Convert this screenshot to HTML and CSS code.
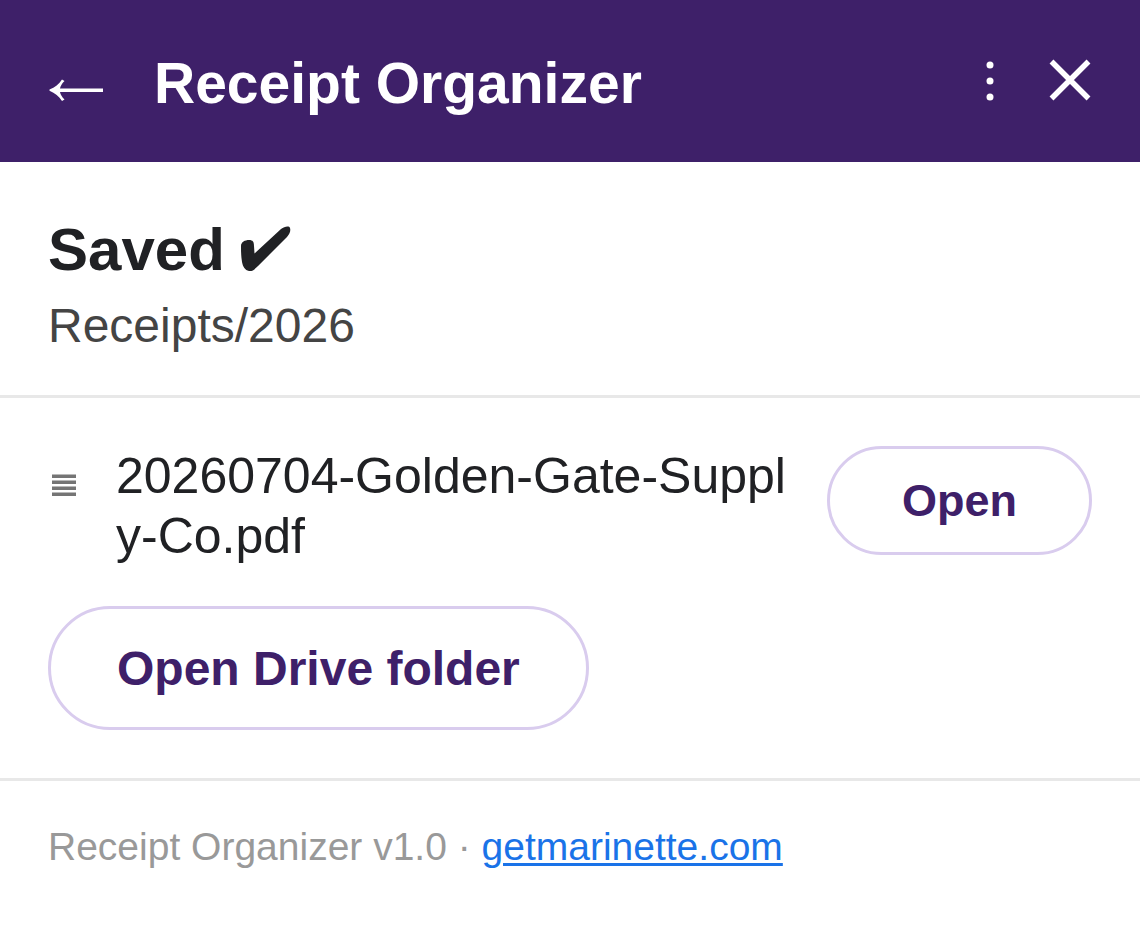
FILE: index.html
```html
<!DOCTYPE html>
<html lang="en">
<head>
    <meta charset="UTF-8">
    <meta name="viewport" content="width=device-width, initial-scale=1.0">
    <title>Receipt Organizer</title>
    <link rel="stylesheet" href="styles.css">
</head>
<body>

<header class="header">
    <div class="header-title">
        <button class="icon-btn" type="button" aria-label="Back">
            <svg width="56" height="24" viewBox="0 0 56 24" fill="#fff">
                <path d="M55 15H12C12.500 17.500 14 20 16.500 22.500L14 24C11 19.500 7 16 1.500 13.800V12.600C7 10.500 11 7 14 2.500L16.500 4C14 6.500 12.500 9 12 11.400H55Z"/>
            </svg>
        </button>
        <h1>Receipt Organizer</h1>
    </div>
    <div class="header-actions">
        <button class="icon-btn" type="button" aria-label="More options">
            <svg width="12" height="48" viewBox="0 0 12 48" fill="#fff">
                <circle cx="6" cy="8" r="3.500"/>
                <circle cx="6" cy="24" r="3.500"/>
                <circle cx="6" cy="40" r="3.500"/>
            </svg>
        </button>
        <button class="icon-btn" type="button" aria-label="Close">
            <svg width="44" height="44" viewBox="0 0 44 44" fill="none" stroke="#fff" stroke-width="5.500">
                <path d="M3.500 2.500L40.500 39.500M40.500 2.500L3.500 39.500"/>
            </svg>
        </button>
    </div>
</header>

<main>
    <!-- Save status -->
    <section class="status">
        <h2>Saved
            <svg class="check" width="52" height="48" viewBox="0 0 52 48" fill="#202124" role="img" aria-label="done">
                <path d="M0 22C0 18 4 16 8 16C12 16 13 18 13 22L13.500 29.500L40 5C43 3 46 2 48.500 3C50 5 49.500 9 46 13L17 42C13 46 11 47.500 8 47C4 46 2 43 1 38C0 32 0 27 0 22Z"/>
            </svg>
        </h2>
        <p>Receipts/2026</p>
    </section>

    <!-- Saved file -->
    <section class="files">
        <div class="file-row">
            <svg class="file-icon" width="32" height="24" viewBox="0 0 32 24" fill="#757575" aria-hidden="true">
                <path d="M4 .5H28V4H4ZM4 6.500H28V10H4ZM4 12.500H28V16H4ZM4 18.500H28V22H4Z"/>
            </svg>
            <span class="file-name">20260704-Golden-Gate-Supply-Co.pdf</span>
            <button class="btn btn-small" type="button">Open</button>
        </div>
        <button class="btn" type="button">Open Drive folder</button>
    </section>
</main>

<footer class="footer">
    Receipt Organizer v1.0 · <a href="#">getmarinette.com</a>
</footer>

</body>
</html>
```
FILE: styles.css
```css
* {
    box-sizing: border-box;
}
body {
    font-family: "Liberation Sans", Arial, sans-serif;
    margin: 0;
    background-color: #fff;
    color: #202124;
}
h1, h2, p {
    margin: 0;
}
svg {
    display: block;
}
.header {
    display: flex;
    align-items: center;
    justify-content: space-between;
    min-height: 162px;
    padding: 0 48px;
    background-color: #3e2069;
    color: #fff;
}
.header-title {
    display: flex;
    align-items: center;
    gap: 50px;
    padding-top: 4px;
}
.header-title .icon-btn {
    padding-top: 12px;
}
.header h1 {
    font-size: 57px;
    line-height: 68px;
}
.header-actions {
    display: flex;
    align-items: center;
    gap: 52px;
}
.icon-btn {
    padding: 0;
    border: none;
    background: none;
    cursor: pointer;
}
.status {
    padding: 48px 48px 33px;
    border-bottom: 3px solid #e8e8e8;
}
.status h2 {
    font-size: 60px;
    line-height: 80px;
}
.check {
    display: inline-block;
    vertical-align: -2px;
}
.status p {
    font-size: 48px;
    line-height: 72px;
    color: #444;
}
.files {
    padding: 48px;
    border-bottom: 3px solid #e8e8e8;
}
.file-row {
    display: flex;
    align-items: flex-start;
    margin-bottom: 40px;
}
.file-icon {
    flex: none;
    margin: 28px 36px 0 0;
}
.file-name {
    flex: 1;
    min-width: 0;
    margin-right: 24px;
    font-size: 50px;
    line-height: 60px;
    word-break: break-all;
}
.btn {
    padding: 31px 66px 29px;
    border: 3px solid #d9ccee;
    border-radius: 62px;
    background-color: #fff;
    color: #3e2069;
    font-family: inherit;
    font-size: 48px;
    font-weight: bold;
    line-height: 58px;
    cursor: pointer;
}
.btn-small {
    flex: none;
    padding: 24px 72px;
    font-size: 45px;
    line-height: 55px;
}
.btn:hover {
    background-color: #f7f3fc;
}
.footer {
    padding: 42px 48px;
    font-size: 39px;
    line-height: 48px;
    color: #999;
}
.footer a {
    color: #1a73e8;
    text-decoration-thickness: 3px;
    text-underline-offset: 3px;
}
```
